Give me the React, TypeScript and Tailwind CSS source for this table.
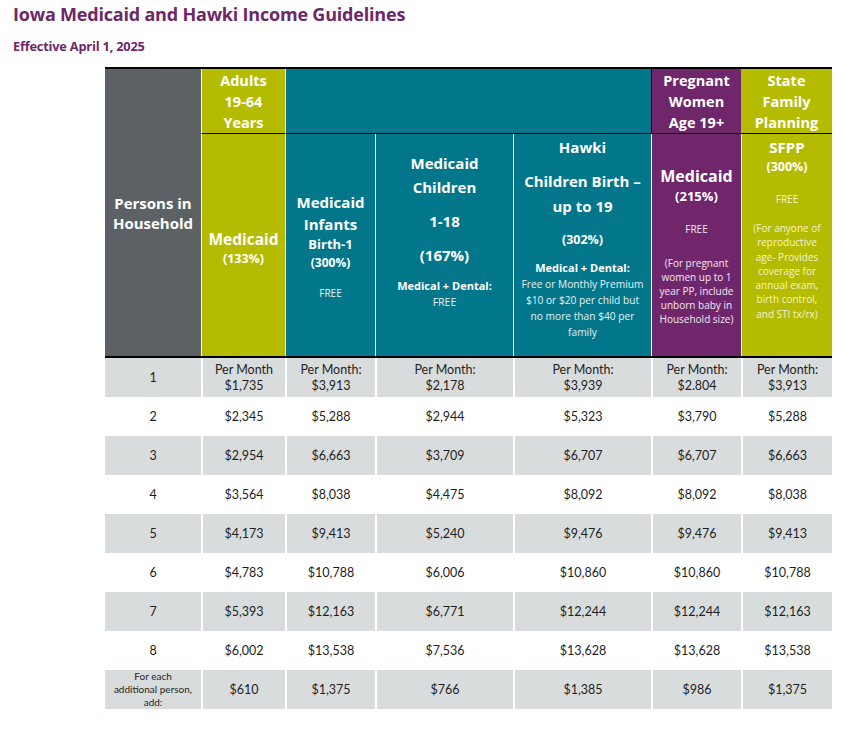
import React from "react";

const GRAY = "bg-[#5b6164]";
const YEL = "bg-[#b5bc00]";
const TEAL = "bg-[#02768a]";
const PUR = "bg-[#6f266b]";

const rows: { label: React.ReactNode; vals: string[]; perMonth?: boolean; small?: boolean }[] = [
  { label: "1", vals: ["$1,735", "$3,913", "$2,178", "$3,939", "$2.804", "$3,913"], perMonth: true },
  { label: "2", vals: ["$2,345", "$5,288", "$2,944", "$5,323", "$3,790", "$5,288"] },
  { label: "3", vals: ["$2,954", "$6,663", "$3,709", "$6,707", "$6,707", "$6,663"] },
  { label: "4", vals: ["$3,564", "$8,038", "$4,475", "$8,092", "$8,092", "$8,038"] },
  { label: "5", vals: ["$4,173", "$9,413", "$5,240", "$9,476", "$9,476", "$9,413"] },
  { label: "6", vals: ["$4,783", "$10,788", "$6,006", "$10,860", "$10,860", "$10,788"] },
  { label: "7", vals: ["$5,393", "$12,163", "$6,771", "$12,244", "$12,244", "$12,163"] },
  { label: "8", vals: ["$6,002", "$13,538", "$7,536", "$13,628", "$13,628", "$13,538"] },
  {
    label: (
      <span className="block text-[10px] leading-[13px]">
        For each
        <br />
        additional person,
        <br />
        add:
      </span>
    ),
    vals: ["$610", "$1,375", "$766", "$1,385", "$986", "$1,375"],
    small: true,
  },
];

export default function App() {
  return (
    <div className="w-[852px] h-[729px] bg-white relative" style={{ fontFamily: "'Open Sans', sans-serif" }}>
      <div className="pl-[13px] pt-[1px]">
        <h1 className="text-[18px] leading-[26px] font-bold text-[#6c2868] tracking-[-0.2px]">
          Iowa Medicaid and Hawki Income Guidelines
        </h1>
        <div className="mt-[11px] text-[12.8px] leading-[16px] font-bold text-[#6c2868] tracking-[-0.2px]">
          Effective April 1, 2025
        </div>
      </div>
      <div
        className="ml-[105px] mt-[13px] w-[727px] grid grid-cols-[96px_84px_90px_138px_138px_90px_91px] border-t-2 border-black text-white"
      >
        {/* Gray spanning cell */}
        <div className={`${GRAY} row-span-2 col-start-1 row-start-1 flex flex-col items-center justify-center text-[15px] leading-[20px] font-bold text-center`}>
          <div>Persons in</div>
          <div>Household</div>
        </div>
        {/* Row 1 */}
        <div className={`${YEL} col-start-2 row-start-1 h-[65px] border-l border-white border-b border-b-black flex flex-col items-center justify-center text-[14.5px] leading-[21px] font-bold text-center`}>
          <div>Adults</div>
          <div>19-64</div>
          <div>Years</div>
        </div>
        <div className={`${TEAL} col-start-3 col-span-3 row-start-1 h-[65px] border-l border-white border-b border-b-black`} />
        <div className={`${PUR} col-start-6 row-start-1 h-[65px] border-l-[1.5px] border-black border-b flex flex-col items-center justify-center text-[14.5px] leading-[21px] font-bold text-center`}>
          <div>Pregnant</div>
          <div>Women</div>
          <div>Age 19+</div>
        </div>
        <div className={`${YEL} col-start-7 row-start-1 h-[65px] border-b border-black flex flex-col items-center justify-center text-[14.5px] leading-[21px] font-bold text-center`}>
          <div>State</div>
          <div>Family</div>
          <div>Planning</div>
        </div>
        {/* Row 2 */}
        <div className={`${YEL} col-start-2 row-start-2 h-[222px] border-l border-white flex flex-col items-center justify-center pt-[6px] text-center font-bold`}>
          <div className="text-[15.5px] leading-[21px]">Medicaid</div>
          <div className="text-[12.5px] leading-[18px]">(133%)</div>
        </div>
        <div className={`${TEAL} col-start-3 row-start-2 h-[222px] border-l border-white flex flex-col items-center justify-center text-center`}>
          <div className="text-[15px] leading-[22px] font-bold">Medicaid</div>
          <div className="text-[15px] leading-[22px] font-bold">Infants</div>
          <div className="text-[13px] leading-[18px] font-bold">Birth-1</div>
          <div className="text-[12px] leading-[20px] font-bold">(300%)</div>
          <div className="mt-[13px] text-[10px] leading-[14px] text-white/90">FREE</div>
        </div>
        <div className={`${TEAL} col-start-4 row-start-2 h-[222px] border-l border-white flex flex-col items-center pt-[17px] text-center`}>
          <div className="text-[15px] leading-[24px] font-bold">Medicaid</div>
          <div className="text-[15px] leading-[24px] font-bold">Children</div>
          <div className="mt-[10px] text-[15px] leading-[24px] font-bold">1-18</div>
          <div className="mt-[10px] text-[15px] leading-[24px] font-bold">(167%)</div>
          <div className="mt-[11px] text-[11px] leading-[16px] font-bold">Medical + Dental:</div>
          <div className="text-[10.5px] leading-[16px] text-white/90">FREE</div>
        </div>
        <div className={`${TEAL} col-start-5 row-start-2 h-[222px] border-l border-white flex flex-col items-center pt-[1px] text-center`}>
          <div className="text-[15px] leading-[24px] font-bold">Hawki</div>
          <div className="mt-[10px] text-[15px] leading-[24px] font-bold">Children Birth –</div>
          <div className="mt-[1px] text-[15px] leading-[24px] font-bold">up to 19</div>
          <div className="mt-[12px] text-[12.5px] leading-[20px] font-bold">(302%)</div>
          <div className="mt-[10px] text-[11px] leading-[16px] font-bold">Medical + Dental:</div>
          <div className="text-[10.2px] leading-[16px] text-white/90">
            Free or Monthly Premium
            <br />
            $10 or $20 per child but
            <br />
            no more than $40 per
            <br />
            family
          </div>
        </div>
        <div className={`${PUR} col-start-6 row-start-2 h-[222px] border-l border-white flex flex-col items-center justify-center text-center`}>
          <div className="text-[16px] leading-[22px] font-bold">Medicaid</div>
          <div className="text-[13px] leading-[18px] font-bold">(215%)</div>
          <div className="mt-[17px] text-[10px] leading-[14px] text-white/90">FREE</div>
          <div className="mt-[20px] text-[10px] leading-[14px] text-white/90">
            (For pregnant
            <br />
            women up to 1
            <br />
            year PP, include
            <br />
            unborn baby in
            <br />
            Household size)
          </div>
        </div>
        <div className={`${YEL} col-start-7 row-start-2 h-[222px] border-l border-white flex flex-col items-center pt-[3px] text-center`}>
          <div className="text-[15px] leading-[20px] font-bold">SFPP</div>
          <div className="mt-[1px] text-[12.5px] leading-[18px] font-bold">(300%)</div>
          <div className="mt-[16px] text-[10px] leading-[14px] text-[#f3f3cf]">FREE</div>
          <div className="mt-[15px] text-[10px] leading-[14.3px] text-[#f3f3cf]">
            (For anyone of
            <br />
            reproductive
            <br />
            age- Provides
            <br />
            coverage for
            <br />
            annual exam,
            <br />
            birth control,
            <br />
            and STI tx/rx)
          </div>
        </div>
        {/* Thick line */}
        <div className="col-span-7 h-[2px] bg-black" />
        {/* Data rows */}
        {rows.map((r, i) => {
          const bg = i % 2 === 0 ? "bg-[#d9dcdd]" : "bg-white";
          return (
            <React.Fragment key={i}>
              <div
                className={`${bg} h-[39px] flex items-center justify-center text-center text-[#1e1e1e] text-[12.5px] leading-[16px]`}
                style={{ fontFamily: "Lato, 'Open Sans', sans-serif" }}
              >
                {r.label}
              </div>
              {r.vals.map((v, j) => (
                <div
                  key={j}
                  className={`${bg} h-[39px] border-l-2 border-white flex flex-col items-center justify-center text-center text-[#1e1e1e] text-[12.5px] leading-[16px]`}
                  style={{ fontFamily: "Lato, 'Open Sans', sans-serif" }}
                >
                  {r.perMonth && <div>{j === 0 ? "Per Month" : "Per Month:"}</div>}
                  <div>{v}</div>
                </div>
              ))}
            </React.Fragment>
          );
        })}
      </div>
    </div>
  );
}
